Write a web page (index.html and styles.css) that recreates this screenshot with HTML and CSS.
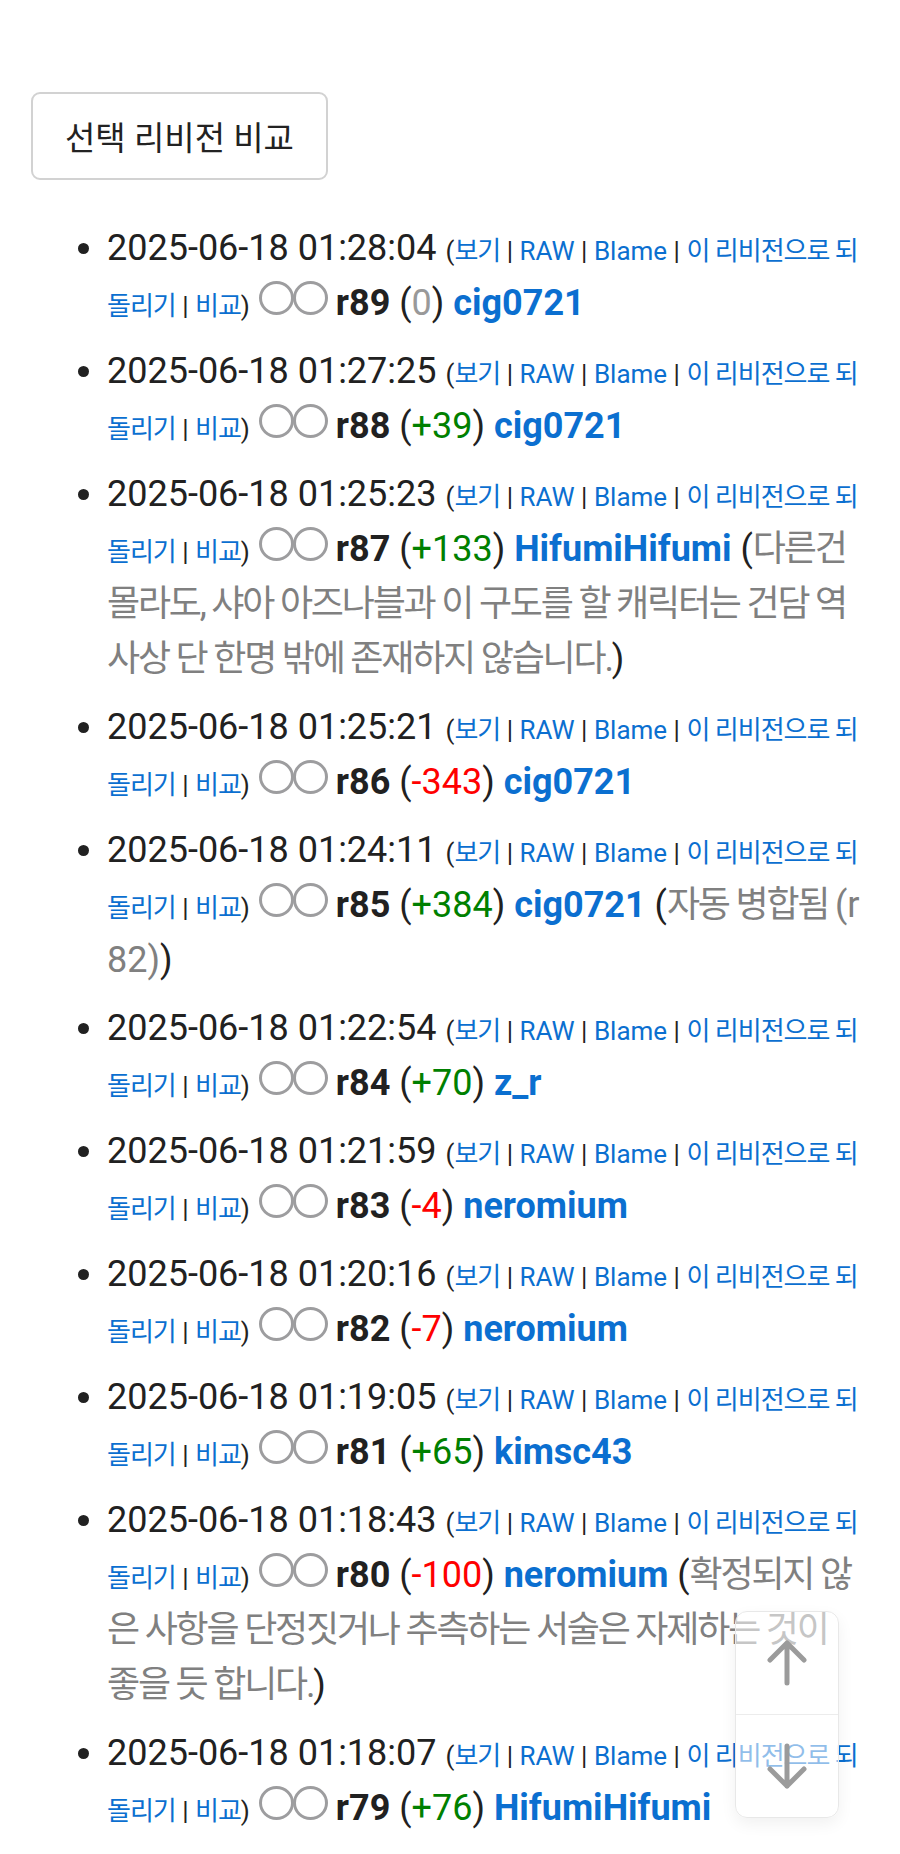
FILE: index.html
```html
<!DOCTYPE html>
<html lang="ko">
<head>
<meta charset="utf-8">
<title>리비전 역사</title>
<link rel="stylesheet" href="styles.css">
</head>
<body>
<div class="page">
  <button class="compare-btn" type="button">선택 리비전 비교</button>
  <ul class="history">
    <li><span class="time">2025-06-18 01:28:04</span> <span class="meta">(<a class="ko" href="#">보기</a> | <a href="#">RAW</a> | <a href="#">Blame</a> | <a class="ko" href="#">이 리비전으로 되돌리기</a> | <a class="ko" href="#">비교</a>)</span> <span class="radio"></span><span class="radio"></span> <strong>r89</strong> (<span class="zero">0</span>) <a class="user" href="#">cig0721</a></li>
    <li><span class="time">2025-06-18 01:27:25</span> <span class="meta">(<a class="ko" href="#">보기</a> | <a href="#">RAW</a> | <a href="#">Blame</a> | <a class="ko" href="#">이 리비전으로 되돌리기</a> | <a class="ko" href="#">비교</a>)</span> <span class="radio"></span><span class="radio"></span> <strong>r88</strong> (<span class="plus">+39</span>) <a class="user" href="#">cig0721</a></li>
    <li><span class="time">2025-06-18 01:25:23</span> <span class="meta">(<a class="ko" href="#">보기</a> | <a href="#">RAW</a> | <a href="#">Blame</a> | <a class="ko" href="#">이 리비전으로 되돌리기</a> | <a class="ko" href="#">비교</a>)</span> <span class="radio"></span><span class="radio"></span> <strong>r87</strong> (<span class="plus">+133</span>) <a class="user" href="#">HifumiHifumi</a> (<span class="log">다른건 몰라도, 샤아 아즈나블과 이 구도를 할 캐릭터는 건담 역사상 단 한명 밖에 존재하지 않습니다.</span>)</li>
    <li><span class="time">2025-06-18 01:25:21</span> <span class="meta">(<a class="ko" href="#">보기</a> | <a href="#">RAW</a> | <a href="#">Blame</a> | <a class="ko" href="#">이 리비전으로 되돌리기</a> | <a class="ko" href="#">비교</a>)</span> <span class="radio"></span><span class="radio"></span> <strong>r86</strong> (<span class="minus">-343</span>) <a class="user" href="#">cig0721</a></li>
    <li><span class="time">2025-06-18 01:24:11</span> <span class="meta">(<a class="ko" href="#">보기</a> | <a href="#">RAW</a> | <a href="#">Blame</a> | <a class="ko" href="#">이 리비전으로 되돌리기</a> | <a class="ko" href="#">비교</a>)</span> <span class="radio"></span><span class="radio"></span> <strong>r85</strong> (<span class="plus">+384</span>) <a class="user" href="#">cig0721</a> (<span class="log">자동 병합됨 </span><span class="log-latin">(r82)</span>)</li>
    <li><span class="time">2025-06-18 01:22:54</span> <span class="meta">(<a class="ko" href="#">보기</a> | <a href="#">RAW</a> | <a href="#">Blame</a> | <a class="ko" href="#">이 리비전으로 되돌리기</a> | <a class="ko" href="#">비교</a>)</span> <span class="radio"></span><span class="radio"></span> <strong>r84</strong> (<span class="plus">+70</span>) <a class="user" href="#">z_r</a></li>
    <li><span class="time">2025-06-18 01:21:59</span> <span class="meta">(<a class="ko" href="#">보기</a> | <a href="#">RAW</a> | <a href="#">Blame</a> | <a class="ko" href="#">이 리비전으로 되돌리기</a> | <a class="ko" href="#">비교</a>)</span> <span class="radio"></span><span class="radio"></span> <strong>r83</strong> (<span class="minus">-4</span>) <a class="user" href="#">neromium</a></li>
    <li><span class="time">2025-06-18 01:20:16</span> <span class="meta">(<a class="ko" href="#">보기</a> | <a href="#">RAW</a> | <a href="#">Blame</a> | <a class="ko" href="#">이 리비전으로 되돌리기</a> | <a class="ko" href="#">비교</a>)</span> <span class="radio"></span><span class="radio"></span> <strong>r82</strong> (<span class="minus">-7</span>) <a class="user" href="#">neromium</a></li>
    <li><span class="time">2025-06-18 01:19:05</span> <span class="meta">(<a class="ko" href="#">보기</a> | <a href="#">RAW</a> | <a href="#">Blame</a> | <a class="ko" href="#">이 리비전으로 되돌리기</a> | <a class="ko" href="#">비교</a>)</span> <span class="radio"></span><span class="radio"></span> <strong>r81</strong> (<span class="plus">+65</span>) <a class="user" href="#">kimsc43</a></li>
    <li><span class="time">2025-06-18 01:18:43</span> <span class="meta">(<a class="ko" href="#">보기</a> | <a href="#">RAW</a> | <a href="#">Blame</a> | <a class="ko" href="#">이 리비전으로 되돌리기</a> | <a class="ko" href="#">비교</a>)</span> <span class="radio"></span><span class="radio"></span> <strong>r80</strong> (<span class="minus">-100</span>) <a class="user" href="#">neromium</a> (<span class="log">확정되지 않은 사항을 단정짓거나 추측하는 서술은 자제하는 것이 좋을 듯 합니다.</span>)</li>
    <li><span class="time">2025-06-18 01:18:07</span> <span class="meta">(<a class="ko" href="#">보기</a> | <a href="#">RAW</a> | <a href="#">Blame</a> | <a class="ko" href="#">이 리비전으로 되돌리기</a> | <a class="ko" href="#">비교</a>)</span> <span class="radio"></span><span class="radio"></span> <strong>r79</strong> (<span class="plus">+76</span>) <a class="user" href="#">HifumiHifumi</a></li>
  </ul>
</div>
<div class="scroll-btns">
  <a class="scroll-btn" href="#" aria-label="맨 위로">
    <svg width="40" height="48" viewBox="0 0 40 48"><path d="M20 44 V4 M3 21 L20 4 L37 21" fill="none" stroke="#9b9b9b" stroke-width="5" stroke-linecap="round" stroke-linejoin="round"/></svg>
  </a>
  <a class="scroll-btn" href="#" aria-label="맨 아래로">
    <svg width="40" height="48" viewBox="0 0 40 48"><path d="M20 4 V44 M3 27 L20 44 L37 27" fill="none" stroke="#9b9b9b" stroke-width="5" stroke-linecap="round" stroke-linejoin="round"/></svg>
  </a>
</div>
</body>
</html>
```

FILE: styles.css
```css
html, body {
  margin: 0;
  padding: 0;
  background: #fff;
}
body {
  font-family: Roboto, "Noto Sans CJK KR", "Noto Sans", sans-serif;
  color: #212121;
  overflow: hidden;
}
.page {
  padding: 92px 38px 0 31px;
}
.compare-btn {
  display: inline-block;
  box-sizing: border-box;
  height: 88px;
  padding: 0 32px;
  font-family: Roboto, "Noto Sans CJK KR", sans-serif;
  font-size: 33px;
  color: #222;
  background: #fff;
  border: 2px solid #d2d2d2;
  border-radius: 9px;
}
.history {
  margin: 41px 0 0 0;
  padding-left: 76px;
  font-size: 36px;
  line-height: 55px;
  word-break: break-all;
}
.history li {
  margin-bottom: 13px;
}
.time {
  color: #212121;
}
.meta {
  font-size: 26px;
  line-height: 1;
  color: #222;
}
.meta .ko {
  letter-spacing: -1px;
}
a {
  color: #0b6fd0;
  text-decoration: none;
}
.radio {
  display: inline-block;
  box-sizing: border-box;
  width: 35px;
  height: 34px;
  border: 3px solid #9d9d9f;
  border-radius: 50%;
  margin-right: -1px;
}
strong {
  font-weight: 700;
  color: #212121;
}
.user {
  font-weight: 700;
}
.zero {
  color: #999;
}
.plus {
  color: #008000;
}
.minus {
  color: #f00;
}
.log {
  color: #808080;
  letter-spacing: -2.2px;
}
.log-latin {
  color: #808080;
}
.scroll-btns {
  position: fixed;
  right: 61px;
  bottom: 36px;
  width: 102px;
  display: flex;
  flex-direction: column;
  background: rgba(255, 255, 255, 0.55);
  border: 1px solid #e8e8e8;
  border-radius: 12px;
  box-shadow: 0 6px 16px rgba(0, 0, 0, 0.06);
  overflow: hidden;
}
.scroll-btn {
  height: 102px;
  display: flex;
  align-items: center;
  justify-content: center;
}
.scroll-btn + .scroll-btn {
  border-top: 1px solid #ececec;
}
```
